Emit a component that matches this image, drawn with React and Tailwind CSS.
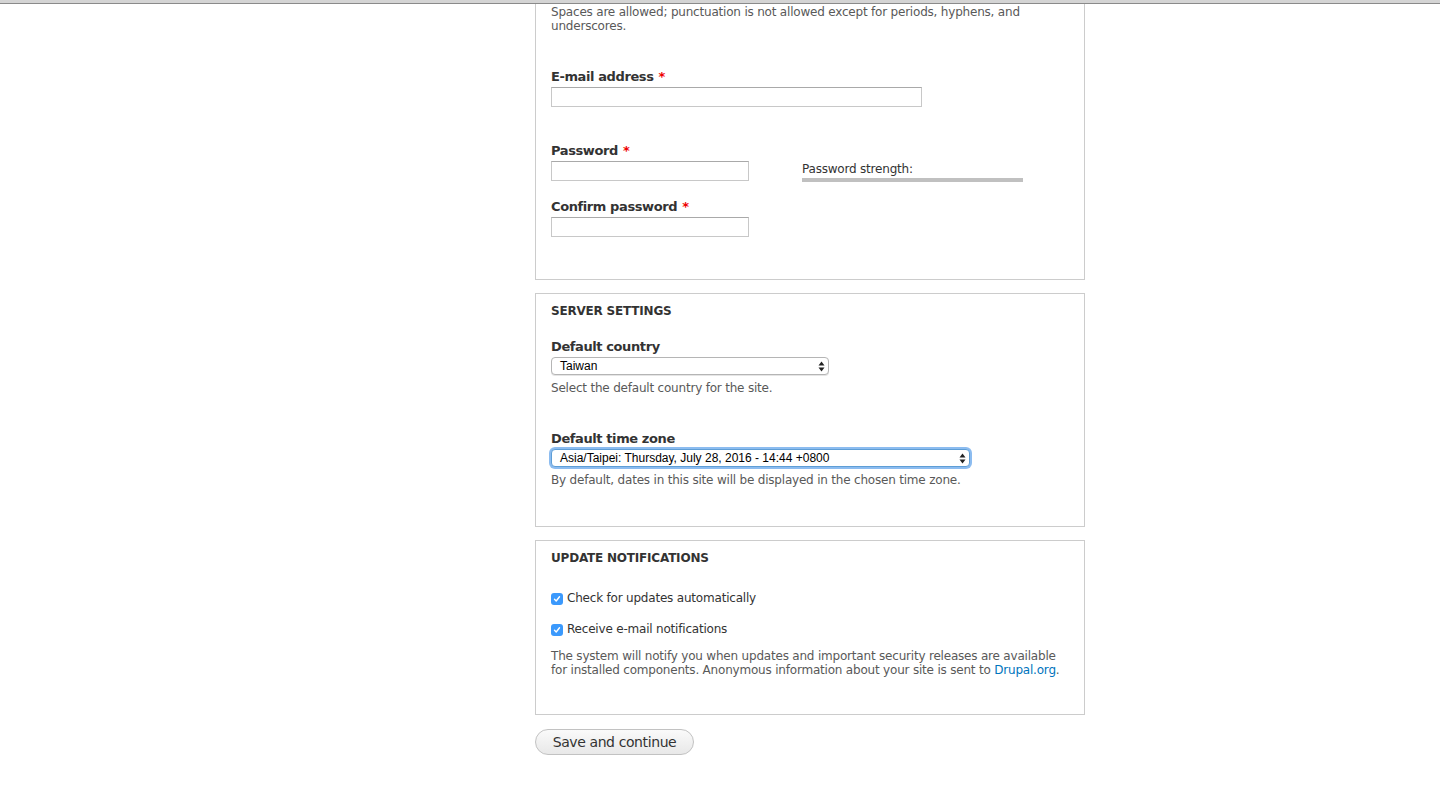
import React from 'react'

const font = { fontFamily: '"DejaVu Sans", Verdana, sans-serif' }

function Label({ children, required }) {
  return (
    <div className="text-[13px] font-bold text-[#333] leading-[16px] tracking-[-0.4px] mb-[2px]">
      {children}
      {required && <span className="text-[#e00] ml-[5px]">*</span>}
    </div>
  )
}

function Select({ value, width, focused }) {
  return (
    <div
      className={
        'mt-[1px] flex items-center justify-between h-[18px] rounded-[4px] bg-white border pl-[8px] pr-[3px] ' +
        (focused
          ? 'border-[#5e9ed6] shadow-[0_0_0_2px_#8cbcf0]'
          : 'border-[#b5b5b5] shadow-[0_1px_0_#e5e5e5]')
      }
      style={{ width }}
    >
      <span
        className="text-[12px] text-black leading-none"
        style={{ fontFamily: '"Liberation Sans", Arial, sans-serif' }}
      >
        {value}
      </span>
      <svg width="7" height="11" viewBox="0 0 7 11">
        <path d="M3.5 0.5 L6.5 4.5 L0.5 4.5 Z" fill="#222" />
        <path d="M3.5 10.5 L6.5 6.5 L0.5 6.5 Z" fill="#222" />
      </svg>
    </div>
  )
}

function Checkbox({ label }) {
  return (
    <div className="flex items-center gap-[4px] h-[16px]">
      <div className="w-[12px] h-[12px] rounded-[3px] bg-[#3b99fc] flex items-center justify-center mt-[1px]">
        <svg width="8" height="8" viewBox="0 0 8 8">
          <path d="M1.5 4.3 L3.2 6 L6.5 1.8" stroke="#fff" strokeWidth="1.4" fill="none" strokeLinecap="round" strokeLinejoin="round" />
        </svg>
      </div>
      <span className="text-[12px] text-[#333] tracking-[-0.2px]">{label}</span>
    </div>
  )
}

function Desc({ children }) {
  return <div className="text-[12px] text-[#595959] leading-[14px] tracking-[-0.2px]">{children}</div>
}

export default function App() {
  return (
    <div className="bg-white min-h-[809px] overflow-hidden" style={font}>
      <div className="h-[3px] bg-[#d4d4d4] border-b border-[#8a8a8a] box-content" />
      <div className="w-[550px] ml-[535px]">
        <div className="border-x border-b border-[#ccc] px-[15px] pt-[1px] h-[276px]">
          <Desc>
            Spaces are allowed; punctuation is not allowed except for periods, hyphens, and underscores.
          </Desc>
          <div className="mt-[36px]">
            <Label required>E-mail address</Label>
            <div className="w-[371px] h-[20px] border border-[#c8c8c8] border-t-[#a9a9a9]" />
          </div>
          <div className="mt-[36px] flex">
            <div className="w-[251px]">
              <Label required>Password</Label>
              <div className="w-[198px] h-[20px] border border-[#c8c8c8] border-t-[#a9a9a9]" />
              <div className="mt-[18px]">
                <Label required>Confirm password</Label>
                <div className="w-[198px] h-[20px] border border-[#c8c8c8] border-t-[#a9a9a9]" />
              </div>
            </div>
            <div className="pt-[19px]">
              <div className="text-[12px] text-[#333] leading-[14px] tracking-[-0.2px]">Password strength:</div>
              <div className="w-[221px] h-[4px] bg-[#c0c0c0] mt-[2px]" />
            </div>
          </div>
        </div>

        <div className="border border-[#ccc] px-[15px] pt-[9px] mt-[13px] h-[234px]">
          <div className="text-[12px] font-bold text-[#333] leading-[16px] tracking-[-0.2px]">SERVER SETTINGS</div>
          <div className="mt-[20px]">
            <Label>Default country</Label>
            <Select value="Taiwan" width={278} />
            <div className="mt-[6px]">
              <Desc>Select the default country for the site.</Desc>
            </div>
          </div>
          <div className="mt-[36px]">
            <Label>Default time zone</Label>
            <Select value="Asia/Taipei: Thursday, July 28, 2016 - 14:44 +0800" width={419} focused />
            <div className="mt-[6px]">
              <Desc>By default, dates in this site will be displayed in the chosen time zone.</Desc>
            </div>
          </div>
        </div>

        <div className="border border-[#ccc] px-[15px] pt-[9px] mt-[13px] h-[175px]">
          <div className="text-[12px] font-bold text-[#333] leading-[16px] tracking-[-0.2px]">UPDATE NOTIFICATIONS</div>
          <div className="mt-[24px]">
            <Checkbox label="Check for updates automatically" />
          </div>
          <div className="mt-[15px]">
            <Checkbox label="Receive e-mail notifications" />
          </div>
          <div className="mt-[12px]">
            <Desc>
              The system will notify you when updates and important security releases are available for installed components. Anonymous information about your site is sent to{' '}
              <a href="#" className="text-[#0074bd]">Drupal.org</a>.
            </Desc>
          </div>
        </div>

        <button className="mt-[14px] w-[159px] h-[26px] rounded-full border border-[#c2c2c2] bg-gradient-to-b from-[#fafafa] to-[#e8e8e8] text-[14px] text-[#333] leading-none tracking-[-0.4px]">
          Save and continue
        </button>
      </div>
    </div>
  )
}
